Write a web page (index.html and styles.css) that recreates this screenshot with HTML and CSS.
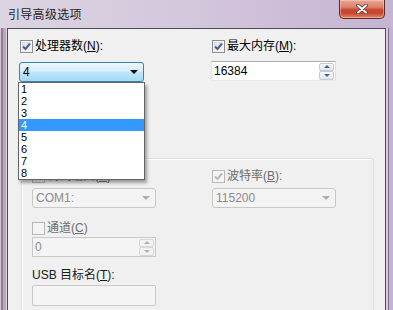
FILE: index.html
```html
<!DOCTYPE html>
<html lang="zh-CN">
<head>
<meta charset="utf-8">
<title>引导高级选项</title>
<link rel="stylesheet" href="styles.css">
</head>
<body>
<div class="window">
  <div class="titlebar">
    <span class="title">引导高级选项</span>
    <div class="close">
      <svg width="12" height="10" viewBox="0 0 12 10">
        <path d="M2 1.5 L10 8.5 M10 1.5 L2 8.5" stroke="#5a3b36" stroke-width="3.6" stroke-linecap="round" fill="none"/>
        <path d="M2 1.5 L10 8.5 M10 1.5 L2 8.5" stroke="#ffffff" stroke-width="2" stroke-linecap="round" fill="none"/>
      </svg>
    </div>
  </div>
  <div class="client">
    <div class="top">
      <div class="col">
        <div class="chk chk-first">
          <span class="box"><svg width="11" height="11" viewBox="0 0 11 11"><path d="M2 5.5 L4.5 8 L9 2.5" stroke="#4a5e9e" stroke-width="2" fill="none"/></svg></span>
          <span>处理器数(<u>N</u>):</span>
        </div>
        <div class="combo open"><span>4</span><span class="arrow"></span></div>
        <ul class="list">
          <li>1</li><li>2</li><li>3</li><li class="sel">4</li><li>5</li><li>6</li><li>7</li><li>8</li>
        </ul>
      </div>
      <div class="col">
        <div class="chk chk-first">
          <span class="box"><svg width="11" height="11" viewBox="0 0 11 11"><path d="M2 5.5 L4.5 8 L9 2.5" stroke="#4a5e9e" stroke-width="2" fill="none"/></svg></span>
          <span>最大内存(<u>M</u>):</span>
        </div>
        <div class="spin spin-top">
          <span>16384</span>
          <div class="spinbtns"><div class="sb"><span class="up"></span></div><div class="sb"><span class="down"></span></div></div>
        </div>
      </div>
    </div>

    <div class="group">
      <div class="grow">
        <div class="gcol">
          <div class="chk dis">
            <span class="box"></span>
            <span>调试端口(<u>S</u>):</span>
          </div>
          <div class="combo disabled"><span>COM1:</span><span class="arrow"></span></div>
        </div>
        <div class="gcol">
          <div class="chk dis">
            <span class="box"><svg width="11" height="11" viewBox="0 0 11 11"><path d="M2 5.5 L4.5 8 L9 2.5" stroke="#b9b9b9" stroke-width="2" fill="none"/></svg></span>
            <span>波特率(<u>B</u>):</span>
          </div>
          <div class="combo disabled"><span>115200</span><span class="arrow"></span></div>
        </div>
      </div>
      <div class="gcol">
        <div class="chk dis chk-chan">
          <span class="box"></span>
          <span>通道(<u>C</u>)</span>
        </div>
        <div class="spin disabled">
          <span>0</span>
          <div class="spinbtns"><div class="sb"><span class="up"></span></div><div class="sb"><span class="down"></span></div></div>
        </div>
        <div class="lbl">USB 目标名(<u>T</u>):</div>
        <div class="edit disabled"></div>
      </div>
    </div>
  </div>
</div>
</body>
</html>
```

FILE: styles.css
```css
* { box-sizing: border-box; }

body {
  margin: 0;
  font-family: "Liberation Sans", "Noto Sans CJK SC", sans-serif;
  font-size: 12px;
  color: #000;
}

.window {
  width: 393px;
  height: 310px;
  overflow: hidden;
  display: flex;
  flex-direction: column;
  background:
    linear-gradient(to right,
      #d2c8d6 0, #d2c8d6 1px,
      #8e7d92 1px, #8e7d92 3px,
      #b8a9bd 3px, #b8a9bd 6px,
      #ddd5e0 6px, #ddd5e0 7px,
      transparent 7px, transparent 386px,
      #d8cadf 386px, #d8cadf 388px,
      #7f6b92 388px, #7f6b92 389px,
      #c6b3d0 389px);
  background-color: #cfc2d8;
}

.titlebar {
  height: 28px;
  flex: none;
  display: flex;
  align-items: flex-start;
  padding: 0 8px;
  background: linear-gradient(to right, #dcd4e2 0%, #d3c8dc 45%, #c5b4d2 100%);
}

.title {
  margin-top: 6px;
  font-family: "Noto Sans CJK SC", sans-serif;
  font-size: 12px;
  line-height: 16px;
  color: #1e1e1e;
  letter-spacing: 0.3px;
}

.close {
  margin-left: auto;
  width: 46px;
  height: 19px;
  border: 1px solid #5b2a22;
  border-top: none;
  border-radius: 0 0 5px 5px;
  background: linear-gradient(#e9a998 0%, #dc8068 40%, #c8432d 55%, #c94a33 75%, #de8a6a 100%);
  box-shadow: inset 0 0 0 1px rgba(255, 220, 200, 0.45);
  display: flex;
  align-items: center;
  justify-content: center;
}

.client {
  flex: 1;
  margin: 0 7px;
  background: #f0f0f0;
  border: 1px solid #4d4a58;
  border-bottom: none;
  padding: 11px 0 0 11px;
}

.top {
  display: flex;
  gap: 67px;
}

.col {
  position: relative;
  width: 125px;
}

.chk {
  display: flex;
  align-items: center;
  gap: 2px;
  height: 13px;
  line-height: 13px;
  white-space: nowrap;
}

.chk-first { margin-left: 1px; }

.box {
  width: 13px;
  height: 13px;
  flex: none;
  border: 1px solid #8f8f8f;
  background: linear-gradient(135deg, #dcdcdc, #f8f8f8);
  box-shadow: inset 0 0 0 1px #f4f4f4;
  display: flex;
  align-items: center;
  justify-content: center;
}

.box svg { display: block; }

.chk.dis { color: #6d6d6d; }
.chk.dis .box {
  border-color: #b8b8b8;
  background: #f4f4f4;
  box-shadow: none;
}

.combo {
  height: 20px;
  border-radius: 3px;
  display: flex;
  align-items: center;
  justify-content: space-between;
  padding: 0 5px 0 3px;
  line-height: 18px;
}

.col .combo { margin-top: 9px; }

.combo.open {
  border: 1px solid #3c7fb1;
  background: linear-gradient(#eaf6fd 0%, #d9effb 45%, #bee6fd 50%, #a7d9f5 100%);
}

.combo .arrow {
  width: 0;
  height: 0;
  border-left: 4px solid transparent;
  border-right: 4px solid transparent;
  border-top: 4px solid #000;
}

.combo.disabled {
  border: 1px solid #c8c8c8;
  background: #f4f4f4;
  color: #8b8b8b;
}

.combo.disabled .arrow { border-top-color: #adadad; }

.list {
  position: absolute;
  left: -1px;
  top: 42px;
  width: 127px;
  margin: 0;
  padding: 0;
  list-style: none;
  background: #fff;
  border: 1px solid #646464;
  box-shadow: 2px 3px 3px rgba(0, 0, 0, 0.35);
  z-index: 5;
}

.list li {
  height: 12px;
  line-height: 12px;
  padding-left: 2px;
  font-size: 11px;
  overflow: hidden;
}

.list li.sel {
  background: #3399ff;
  color: #fff;
}

.spin {
  height: 20px;
  display: flex;
  align-items: center;
  justify-content: space-between;
  padding: 0 1px 0 2px;
  background: #fff;
  border: 1px solid #abadb3;
  border-left-color: #e2e3ea;
  border-right-color: #dbdfe6;
  border-bottom-color: #e3e9ef;
}

.spin-top { margin-top: 8px; }

.spinbtns {
  display: flex;
  flex-direction: column;
  width: 15px;
  height: 17px;
}

.sb {
  flex: 1;
  border: 1px solid #c5cbd3;
  border-radius: 2px;
  background: linear-gradient(#f6f8fa, #e3e7ec);
  display: flex;
  align-items: center;
  justify-content: center;
}

.sb .up, .sb .down {
  width: 0;
  height: 0;
  border-left: 3px solid transparent;
  border-right: 3px solid transparent;
}

.sb .up { border-bottom: 3px solid #4d6185; }
.sb .down { border-top: 3px solid #4d6185; }

.spin.disabled {
  border: 1px solid #c9c9c9;
  background: #f4f4f4;
  color: #8b8b8b;
}

.spin.disabled .sb {
  border-color: #d8d8d8;
  background: #f2f2f2;
}

.spin.disabled .up { border-bottom-color: #b0b0b0; }
.spin.disabled .down { border-top-color: #b0b0b0; }

.group {
  margin-top: 76px;
  margin-left: 2px;
  width: 353px;
  height: 200px;
  border: 1px solid #d5dfe5;
  border-radius: 3px;
  box-shadow: inset 1px 1px 0 #fff;
  padding: 11px 0 0 10px;
}

.grow {
  display: flex;
  gap: 56px;
}

.gcol {
  width: 124px;
}

.gcol .combo { margin-top: 5px; }

.chk-chan { margin-top: 14px; }

.gcol .spin.disabled { margin-top: 2px; }

.lbl {
  margin-top: 12px;
  height: 13px;
  line-height: 13px;
  color: #1a1a1a;
  white-space: nowrap;
}

.edit {
  margin-top: 3px;
  height: 21px;
  border: 1px solid #c9c9c9;
  border-radius: 2px;
  background: #f4f4f4;
}
```
